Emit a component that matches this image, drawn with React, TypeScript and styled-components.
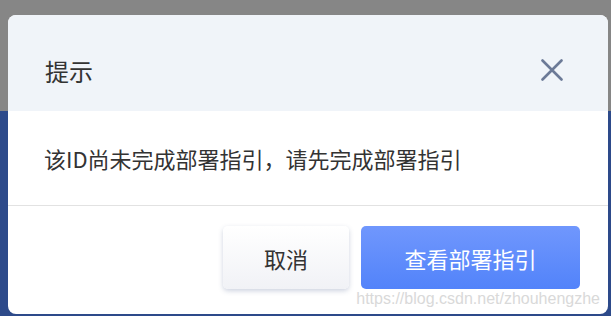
import styled, { createGlobalStyle } from "styled-components";

const GlobalStyle = createGlobalStyle`
  html, body {
    margin: 0;
    padding: 0;
  }
  body {
    font-family: "Noto Sans CJK SC", "Noto Sans", sans-serif;
  }
`;

const Backdrop = styled.div`
  width: 611px;
  height: 316px;
  box-sizing: border-box;
  padding: 15px 3px 2px 8px;
  background: linear-gradient(#868686 0 111px, #2d4a8a 111px);
  overflow: hidden;
`;

const Dialog = styled.div`
  position: relative;
  width: 600px;
  height: 299px;
  background: #fff;
  border-radius: 8px;
  overflow: hidden;
  display: flex;
  flex-direction: column;
`;

const Header = styled.div`
  height: 96px;
  box-sizing: border-box;
  padding: 14px 44px 0 37px;
  background: #f0f4f9;
  display: flex;
  align-items: center;
  justify-content: space-between;
`;

const Title = styled.div`
  font-size: 24px;
  color: #333;
`;

const CloseButton = styled.button`
  width: 24px;
  height: 24px;
  padding: 0;
  border: none;
  background: none;
  display: flex;
  align-items: center;
  justify-content: center;
  cursor: pointer;
`;

const Body = styled.div`
  height: 94px;
  padding: 0 36px;
  display: flex;
  align-items: center;
  font-size: 22px;
  color: #333;
  border-bottom: 1px solid #e2e2e2;
`;

const Footer = styled.div`
  flex: 1;
  display: flex;
  justify-content: flex-end;
  gap: 12px;
  padding: 20px 28px 0 0;
`;

const Button = styled.button<{ $primary?: boolean }>`
  height: 63px;
  width: ${(p) => (p.$primary ? "219px" : "126px")};
  border: none;
  border-radius: 5px;
  font-family: inherit;
  font-size: 22px;
  cursor: pointer;
  color: ${(p) => (p.$primary ? "#fff" : "#333")};
  background: ${(p) =>
    p.$primary
      ? "linear-gradient(#7097fd, #5283fa)"
      : "linear-gradient(#ffffff, #f1f2f6)"};
  box-shadow: ${(p) =>
    p.$primary ? "none" : "0 2px 5px rgba(60, 80, 130, 0.25)"};
`;

const Watermark = styled.div`
  position: absolute;
  right: 8px;
  bottom: 6px;
  font-family: "Liberation Sans", Arial, sans-serif;
  font-size: 16px;
  color: #d9d9d9;
  pointer-events: none;
`;

function App() {
  return (
    <>
      <GlobalStyle />
      <Backdrop>
        <Dialog>
          <Header>
            <Title>提示</Title>
            <CloseButton aria-label="close">
              <svg width="22" height="22" viewBox="0 0 22 22">
                <path
                  d="M1.5 1.5 L20.5 20.5 M20.5 1.5 L1.5 20.5"
                  stroke="#6c7a97"
                  strokeWidth="2.6"
                  strokeLinecap="round"
                />
              </svg>
            </CloseButton>
          </Header>
          <Body>该ID尚未完成部署指引，请先完成部署指引</Body>
          <Footer>
            <Button>取消</Button>
            <Button $primary>查看部署指引</Button>
          </Footer>
          <Watermark>https://blog.csdn.net/zhouhengzhe</Watermark>
        </Dialog>
      </Backdrop>
    </>
  );
}

export default App;
